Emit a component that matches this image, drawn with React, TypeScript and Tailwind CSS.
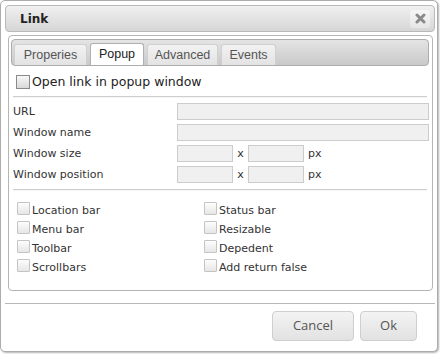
import React from "react";

const dv = { fontFamily: '"DejaVu Sans", Verdana, sans-serif' };
const ar = { fontFamily: '"Liberation Sans", Arial, sans-serif' };
const os = { fontFamily: '"Open Sans", "Segoe UI", sans-serif' };

function Box() {
  return (
    <span className="inline-block w-[13px] h-[13px] shrink-0 rounded-[1px] border border-[#c4c4c4] bg-gradient-to-b from-[#fdfdfd] to-[#e6e6e6]" />
  );
}

function Check({ label }: { label: string }) {
  return (
    <div className="flex items-center h-[13px] gap-[2px] text-[11px] text-[#333]" style={dv}>
      <Box />
      <span className="leading-none translate-y-[2px]">{label}</span>
    </div>
  );
}

function Input({ w }: { w?: string }) {
  return <div className={"h-[17px] border border-[#cccccc] bg-[#f0f0f0] " + (w ?? "flex-1")} />;
}

function Row({ label, children }: { label: string; children: React.ReactNode }) {
  return (
    <div className="flex items-center h-[17px]">
      <div className="w-[164px] text-[11px] text-[#333] leading-none" style={dv}>
        {label}
      </div>
      <div className="flex-1 flex items-center">{children}</div>
    </div>
  );
}

function SizeInputs() {
  return (
    <>
      <Input w="w-[56px]" />
      <span className="w-[15px] text-center text-[11px] text-[#333] leading-none" style={dv}>
        x
      </span>
      <Input w="w-[56px]" />
      <span className="ml-[4px] text-[11px] text-[#333] leading-none" style={dv}>
        px
      </span>
    </>
  );
}

export default function App() {
  const tabs = [
    { t: "Properies", w: "w-[73px]" },
    { t: "Popup", w: "w-[54px]", active: true },
    { t: "Advanced", w: "w-[71px]" },
    { t: "Events", w: "w-[55px]" },
  ];
  return (
    <div className="w-[440px] h-[354px] bg-white">
      <div className="w-[438px] h-[352px] border border-[#acacac] rounded-[5px] bg-white shadow-[1px_1px_2px_rgba(0,0,0,0.3)] flex flex-col pt-[4px] pl-[4px] pr-[2px]">
        {/* title bar */}
        <div className="h-[27px] shrink-0 rounded-[4px] border border-[#b9b9b9] bg-gradient-to-b from-[#f0f0f0] to-[#d6d6d6] flex items-center pl-[14px] pr-[4px]">
          <span className="text-[12px] font-bold text-[#222] leading-none" style={dv}>
            Link
          </span>
          <div className="ml-auto w-[20px] h-[18px] rounded-[3px] bg-gradient-to-b from-[#f6f6f6] to-[#e6e6e6] flex items-center justify-center">
            <svg width="11" height="11" viewBox="0 0 11 11">
              <path d="M2 2 L9 9 M9 2 L2 9" stroke="#8a8a8a" strokeWidth="3" strokeLinecap="round" />
            </svg>
          </div>
        </div>

        {/* content panel */}
        <div className="mt-[3px] ml-[3px] mr-[2px] h-[256px] shrink-0 rounded-[4px] border border-[#b5b5b5] flex flex-col">
          {/* tab bar */}
          <div className="mt-[3px] ml-[2px] mr-[3px] h-[27px] rounded-[4px] border border-[#acacac] bg-gradient-to-b from-[#e4e4e4] to-[#c9c9c9] flex items-end pl-[2px] gap-[3px]">
            {tabs.map((t) => (
              <div
                key={t.t}
                className={
                  "rounded-t-[3px] border border-b-0 flex items-center justify-center text-[12.5px] leading-none " +
                  t.w +
                  " " +
                  (t.active
                    ? "bg-white border-[#b0b0b0] text-[#222] h-[22px]"
                    : "h-[21px] bg-gradient-to-b from-[#f2f2f2] to-[#e3e3e3] border-[#d0d0d0] text-[#555]")
                }
                style={ar}
              >
                {t.t}
              </div>
            ))}
          </div>

          <div className="pl-[4px] pr-[3px] flex flex-col">
            {/* open link */}
            <div className="mt-[9px] ml-[3px] flex items-center h-[14px] gap-[2px]">
              <span className="inline-block w-[14px] h-[14px] border border-[#8a8a8a] bg-gradient-to-b from-[#f8f8f8] to-[#d8d8d8]" />
              <span className="text-[12.5px] text-[#222] leading-none" style={dv}>
                Open link in popup window
              </span>
            </div>
            <div className="mt-[7px] mr-[2px] h-[2px] border-t border-[#cfcfcf] bg-[#f4f4f4]" />

            <div className="mt-[5px] flex flex-col gap-[4px]">
              <Row label="URL">
                <Input />
              </Row>
              <Row label="Window name">
                <Input />
              </Row>
              <Row label="Window size">
                <SizeInputs />
              </Row>
              <Row label="Window position">
                <SizeInputs />
              </Row>
            </div>

            <div className="mt-[6px] mr-[2px] h-[2px] border-t border-[#cfcfcf] bg-[#f4f4f4]" />

            <div className="mt-[11px] ml-[4px] grid grid-cols-[187px_1fr] gap-y-[6px]">
              <Check label="Location bar" />
              <Check label="Status bar" />
              <Check label="Menu bar" />
              <Check label="Resizable" />
              <Check label="Toolbar" />
              <Check label="Depedent" />
              <Check label="Scrollbars" />
              <Check label="Add return false" />
            </div>
          </div>
        </div>

        {/* footer */}
        <div className="mt-[12px] h-[1px] bg-[#b8b8b8]" />
        <div className="mt-[7px] flex justify-end pr-[18px] gap-[6px]">
          <button
            className="w-[82px] h-[30px] rounded-[4px] border border-[#cfcfcf] bg-gradient-to-b from-[#f3f3f3] to-[#e2e2e2] text-[13px] text-[#555]"
            style={os}
          >
            Cancel
          </button>
          <button
            className="w-[57px] h-[30px] rounded-[4px] border border-[#cfcfcf] bg-gradient-to-b from-[#f3f3f3] to-[#e2e2e2] text-[13px] text-[#555]"
            style={os}
          >
            Ok
          </button>
        </div>
      </div>
    </div>
  );
}
